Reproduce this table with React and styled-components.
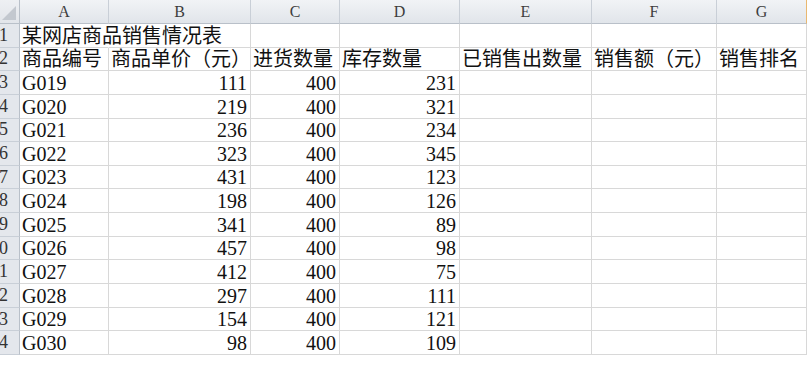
import React from "react";
import styled, { createGlobalStyle } from "styled-components";

const COLUMNS = ["A", "B", "C", "D", "E", "F", "G"];
const WIDTHS = [89, 142, 89, 120, 132, 125, 90];

const HEADERS = [
  "商品编号",
  "商品单价（元）",
  "进货数量",
  "库存数量",
  "已销售出数量",
  "销售额（元）",
  "销售排名",
];

const ITEMS = [
  ["G019", 111, 400, 231],
  ["G020", 219, 400, 321],
  ["G021", 236, 400, 234],
  ["G022", 323, 400, 345],
  ["G023", 431, 400, 123],
  ["G024", 198, 400, 126],
  ["G025", 341, 400, 89],
  ["G026", 457, 400, 98],
  ["G027", 412, 400, 75],
  ["G028", 297, 400, 111],
  ["G029", 154, 400, 121],
  ["G030", 98, 400, 109],
];

const GlobalStyle = createGlobalStyle`
  html, body {
    margin: 0;
    padding: 0;
    background: #ffffff;
  }
`;

function App() {
  const rows = [
    ["某网店商品销售情况表", "", "", "", "", "", ""],
    HEADERS,
    ...ITEMS.map((item) => [...item, "", "", ""]),
  ];

  return (
    <>
      <GlobalStyle />
      <Sheet>
        <Corner>
          <svg width="14" height="14" viewBox="0 0 14 14">
            <polygon points="14,0 14,14 0,14" fill="#c3c8cf" />
          </svg>
        </Corner>
        {COLUMNS.map((col, i) => (
          <ColHead key={col} $last={i === COLUMNS.length - 1}>
            {col}
          </ColHead>
        ))}

        {rows.map((row, r) => (
          <React.Fragment key={r}>
            <RowHead>
              <span>{r + 1}</span>
            </RowHead>
            {row.map((value, c) => {
              const isNumber = typeof value === "number";
              // the title in A1 runs over the empty B1 cell
              const spill = r === 0 && c === 0;
              return (
                <Cell key={c} $right={isNumber} $spill={spill}>
                  {value}
                </Cell>
              );
            })}
          </React.Fragment>
        ))}
      </Sheet>
    </>
  );
}

const Sheet = styled.div`
  display: grid;
  grid-template-columns: 20px ${WIDTHS.map((w) => `${w}px`).join(" ")};
  grid-template-rows: 24px repeat(14, 23.65px);
  width: max-content;
  font-family: "Liberation Serif", "Noto Sans CJK SC", serif;
  color: #111;
`;

const Corner = styled.div`
  background: linear-gradient(#eef0f3, #e2e5ea);
  border-right: 1px solid #b9c0c9;
  border-bottom: 1px solid #b9c0c9;
  display: flex;
  align-items: flex-end;
  justify-content: flex-end;
  padding: 0 3px 3px 0;
  box-sizing: border-box;
`;

const ColHead = styled.div`
  background: linear-gradient(#f1f3f6, #e1e5ea);
  border-right: 1px solid ${(p) => (p.$last ? "#e9b870" : "#c9cfd7")};
  border-bottom: 1px solid #b9c0c9;
  display: flex;
  align-items: center;
  justify-content: center;
  font-size: 16px;
  color: #3d3d3d;
  box-sizing: border-box;
`;

const RowHead = styled.div`
  background: #e4e7ec;
  border-right: 1px solid #b9c0c9;
  border-bottom: 1px solid #c9cfd7;
  display: flex;
  align-items: center;
  justify-content: flex-end;
  overflow: hidden;
  padding-right: 11px;
  font-size: 18px;
  color: #333;
  box-sizing: border-box;
  white-space: nowrap;

  span {
    flex-shrink: 0;
  }
`;

const Cell = styled.div`
  border-right: 1px solid ${(p) => (p.$spill ? "transparent" : "#d8d8d8")};
  border-bottom: 1px solid #d8d8d8;
  display: flex;
  align-items: flex-end;
  justify-content: ${(p) => (p.$right ? "flex-end" : "flex-start")};
  padding: ${(p) => (p.$right ? "0 3px 0 0" : "0 0 0 2px")};
  font-size: 20px;
  line-height: 22px;
  white-space: nowrap;
  overflow: ${(p) => (p.$spill ? "visible" : "hidden")};
  box-sizing: border-box;
  position: relative;
  z-index: ${(p) => (p.$spill ? 1 : 0)};
`;

export default App;
